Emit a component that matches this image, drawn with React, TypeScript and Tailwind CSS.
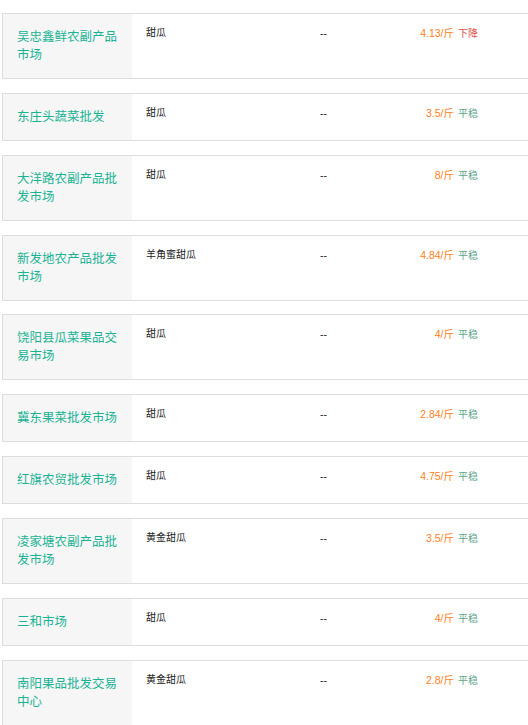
import React from "react";

type Row = { market: string; variety: string; price: string; trend: string };

const rows: Row[] = [
  { market: "吴忠鑫鲜农副产品市场", variety: "甜瓜", price: "4.13/斤", trend: "下降" },
  { market: "东庄头蔬菜批发", variety: "甜瓜", price: "3.5/斤", trend: "平稳" },
  { market: "大洋路农副产品批发市场", variety: "甜瓜", price: "8/斤", trend: "平稳" },
  { market: "新发地农产品批发市场", variety: "羊角蜜甜瓜", price: "4.84/斤", trend: "平稳" },
  { market: "饶阳县瓜菜果品交易市场", variety: "甜瓜", price: "4/斤", trend: "平稳" },
  { market: "冀东果菜批发市场", variety: "甜瓜", price: "2.84/斤", trend: "平稳" },
  { market: "红旗农贸批发市场", variety: "甜瓜", price: "4.75/斤", trend: "平稳" },
  { market: "凌家塘农副产品批发市场", variety: "黄金甜瓜", price: "3.5/斤", trend: "平稳" },
  { market: "三和市场", variety: "甜瓜", price: "4/斤", trend: "平稳" },
  { market: "南阳果品批发交易中心", variety: "黄金甜瓜", price: "2.8/斤", trend: "平稳" },
];

export default function App() {
  return (
    <div
      className="w-[528px] h-[725px] overflow-hidden bg-white pt-[13px] pl-[2px] flex flex-col gap-[13.85px]"
      style={{ fontFamily: '"Liberation Sans", "Noto Sans CJK SC", sans-serif' }}
    >
      {rows.map((r, i) => (
        <div key={i} className="flex shrink-0 border-y border-l border-[#dddddd] w-[526px]">
          <div className="w-[129px] shrink-0 bg-[#f6f6f6] pl-[14px] pr-[8px] py-[14px] text-[12.5px] leading-[18px] text-[#19b394]">
            {r.market}
          </div>
          <div className="w-[174px] shrink-0 pl-[14px] pt-[12px] text-[10px] leading-[14px] text-[#222222]">
            {r.variety}
          </div>
          <div className="w-[100px] shrink-0 pl-[14px] pt-[12px] text-[10.5px] leading-[14px] text-[#222222]">
            --
          </div>
          <div className="w-[72px] shrink-0 pt-[12px] text-right text-[10.5px] leading-[14px] whitespace-nowrap">
            <span className="text-[#ff7f19]">{r.price}</span>
            <span className="ml-[4px] text-[10px]" style={{ color: r.trend === "下降" ? "#e2524b" : "#5ea58d" }}>
              {r.trend}
            </span>
          </div>
          <div className="flex-1" />
        </div>
      ))}
    </div>
  );
}
